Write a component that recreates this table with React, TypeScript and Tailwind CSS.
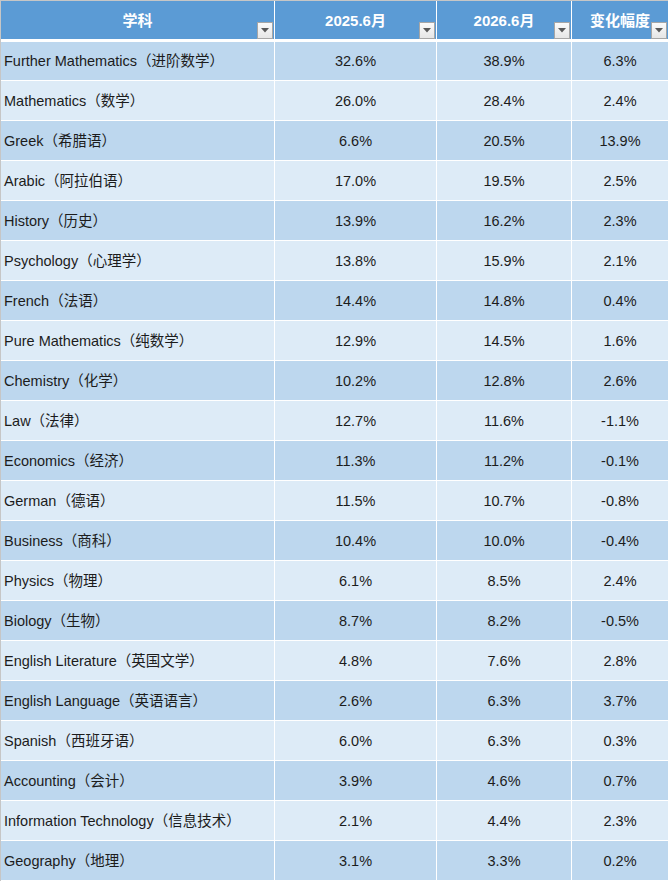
import React from 'react';

const rows: [string, string, string, string][] = [
  ['Further Mathematics（进阶数学）', '32.6%', '38.9%', '6.3%'],
  ['Mathematics（数学）', '26.0%', '28.4%', '2.4%'],
  ['Greek（希腊语）', '6.6%', '20.5%', '13.9%'],
  ['Arabic（阿拉伯语）', '17.0%', '19.5%', '2.5%'],
  ['History（历史）', '13.9%', '16.2%', '2.3%'],
  ['Psychology（心理学）', '13.8%', '15.9%', '2.1%'],
  ['French（法语）', '14.4%', '14.8%', '0.4%'],
  ['Pure Mathematics（纯数学）', '12.9%', '14.5%', '1.6%'],
  ['Chemistry（化学）', '10.2%', '12.8%', '2.6%'],
  ['Law（法律）', '12.7%', '11.6%', '-1.1%'],
  ['Economics（经济）', '11.3%', '11.2%', '-0.1%'],
  ['German（德语）', '11.5%', '10.7%', '-0.8%'],
  ['Business（商科）', '10.4%', '10.0%', '-0.4%'],
  ['Physics（物理）', '6.1%', '8.5%', '2.4%'],
  ['Biology（生物）', '8.7%', '8.2%', '-0.5%'],
  ['English Literature（英国文学）', '4.8%', '7.6%', '2.8%'],
  ['English Language（英语语言）', '2.6%', '6.3%', '3.7%'],
  ['Spanish（西班牙语）', '6.0%', '6.3%', '0.3%'],
  ['Accounting（会计）', '3.9%', '4.6%', '0.7%'],
  ['Information Technology（信息技术）', '2.1%', '4.4%', '2.3%'],
  ['Geography（地理）', '3.1%', '3.3%', '0.2%'],
];

const headers = ['学科', '2025.6月', '2026.6月', '变化幅度'];

// little filter button that sits in the bottom-right corner of each header cell
function FilterButton() {
  return (
    <div className="absolute bottom-0 right-px w-4 h-[17px] border border-[#a6a6a6] bg-gradient-to-b from-[#fafafa] to-[#e6e6e6] flex items-center justify-center">
      <svg width="8" height="5" viewBox="0 0 8 5">
        <path d="M0 0h8L4 4.5z" fill="#595959" />
      </svg>
    </div>
  );
}

export default function App() {
  return (
    <div
      className="w-[668px] h-[881px] overflow-hidden bg-white border-t border-l border-[#c6c6c6]"
      style={{ fontFamily: '"Liberation Sans", "Noto Sans CJK SC", sans-serif' }}
    >
      <div className="grid grid-cols-[273px_161px_134px_96px] gap-px">
        {/* Header */}
        {headers.map((h) => (
          <div
            key={h}
            className="relative h-[38px] mb-[2px] bg-[#5b9bd5] flex items-center justify-center text-white font-bold text-[15px] pt-[2px]"
          >
            {h}
            <FilterButton />
          </div>
        ))}

        {/* Body */}
        {rows.map((r, i) => {
          const bg = i % 2 === 0 ? 'bg-[#bdd7ee]' : 'bg-[#ddebf7]';
          const h = i === 0 ? 'h-[38px]' : 'h-[39px]';
          return (
            <React.Fragment key={r[0]}>
              <div className={`${bg} ${h} flex items-center pl-[3px] pt-[2px] text-[14.5px] text-[#1c1c1c] whitespace-nowrap`}>
                {r[0]}
              </div>
              <div className={`${bg} ${h} flex items-center justify-center pt-[2px] text-[14.5px] text-[#1c1c1c]`}>{r[1]}</div>
              <div className={`${bg} ${h} flex items-center justify-center pt-[2px] text-[14.5px] text-[#1c1c1c]`}>{r[2]}</div>
              <div className={`${bg} ${h} flex items-center justify-center pt-[2px] text-[14.5px] text-[#1c1c1c]`}>{r[3]}</div>
            </React.Fragment>
          );
        })}
      </div>
    </div>
  );
}
